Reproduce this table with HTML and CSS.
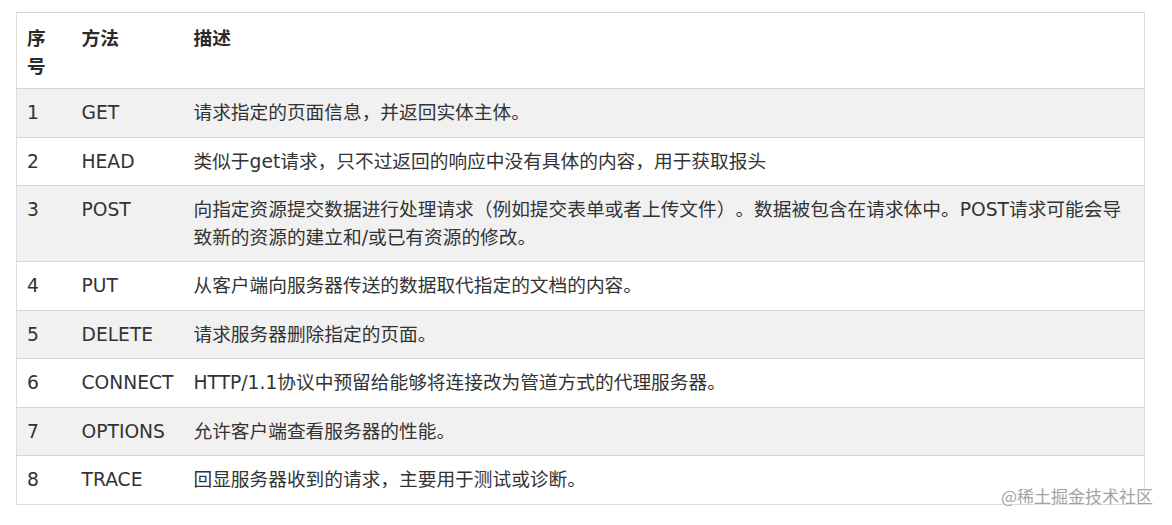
FILE: index.html
```html
<!DOCTYPE html>
<html lang="zh">
<head>
<meta charset="utf-8">
<title>HTTP 请求方法</title>
<link rel="stylesheet" href="styles.css">
</head>
<body>
<div class="page">
  <table class="methods">
    <colgroup>
      <col class="c-no">
      <col class="c-method">
      <col class="c-desc">
    </colgroup>
    <thead>
      <tr><th>序号</th><th>方法</th><th>描述</th></tr>
    </thead>
    <tbody>
      <tr><td>1</td><td>GET</td><td>请求指定的页面信息，并返回实体主体。</td></tr>
      <tr><td>2</td><td>HEAD</td><td>类似于get请求，只不过返回的响应中没有具体的内容，用于获取报头</td></tr>
      <tr><td>3</td><td>POST</td><td>向指定资源提交数据进行处理请求（例如提交表单或者上传文件）。数据被包含在请求体中。POST请求可能会导致新的资源的建立和/或已有资源的修改。</td></tr>
      <tr><td>4</td><td>PUT</td><td>从客户端向服务器传送的数据取代指定的文档的内容。</td></tr>
      <tr><td>5</td><td>DELETE</td><td>请求服务器删除指定的页面。</td></tr>
      <tr><td>6</td><td>CONNECT</td><td>HTTP/1.1协议中预留给能够将连接改为管道方式的代理服务器。</td></tr>
      <tr><td>7</td><td>OPTIONS</td><td>允许客户端查看服务器的性能。</td></tr>
      <tr><td>8</td><td>TRACE</td><td>回显服务器收到的请求，主要用于测试或诊断。</td></tr>
    </tbody>
  </table>
  <div class="watermark">@稀土掘金技术社区</div>
</div>
</body>
</html>
```

FILE: styles.css
```css
html, body {
  margin: 0;
  padding: 0;
  background: #ffffff;
}

.page {
  position: relative;
  width: 1172px;
  height: 525px;
  padding: 12px 0 0 16px;
  box-sizing: border-box;
  font-family: "DejaVu Sans", "Noto Sans CJK SC", sans-serif;
  color: #333333;
  text-spacing-trim: space-all;
}

.methods {
  width: 1129px;
  table-layout: fixed;
  border-collapse: collapse;
  border: 1px solid #dcdcdc;
  font-size: 18.7px;
  line-height: 27.5px;
}

.c-no { width: 55px; }
.c-method { width: 112px; }

.methods th,
.methods td {
  padding: 10px;
  text-align: left;
  vertical-align: top;
  border-top: 1px solid #d6d6d6;
}

.methods th {
  font-family: "Noto Sans CJK SC", sans-serif;
  font-weight: 700;
  color: #2b2b2b;
  background: #ffffff;
}

.methods tbody tr:nth-child(odd) td {
  background: #f1f1f1;
}

.methods tbody tr:nth-child(even) td {
  background: #ffffff;
}

.watermark {
  position: absolute;
  right: 19px;
  top: 484px;
  font-family: "Noto Sans CJK SC", sans-serif;
  font-size: 17px;
  line-height: 24px;
  color: #a3a3a3;
  text-shadow: 0 0 1px #ffffff, 0 0 2px #ffffff;
}
```
